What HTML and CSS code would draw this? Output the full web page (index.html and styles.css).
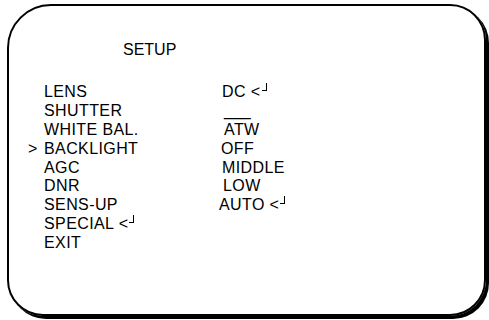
FILE: index.html
```html
<!DOCTYPE html>
<html>
<head>
<meta charset="utf-8">
<link rel="stylesheet" href="styles.css">
</head>
<body>
<div class="frame">
  <div class="title">SETUP</div>
  <div class="menu">
    <span class="mark"></span><span class="label">LENS</span><span class="value v-dc">DC &lt;<span class="enter"></span></span>
    <span class="mark"></span><span class="label">SHUTTER</span><span class="value v-bar">___</span>
    <span class="mark"></span><span class="label">WHITE BAL.</span><span class="value v-atw">ATW</span>
    <span class="mark">&gt;</span><span class="label">BACKLIGHT</span><span class="value">OFF</span>
    <span class="mark"></span><span class="label">AGC</span><span class="value v-dc">MIDDLE</span>
    <span class="mark"></span><span class="label">DNR</span><span class="value v-low">LOW</span>
    <span class="mark"></span><span class="label">SENS-UP</span><span class="value v-auto">AUTO &lt;<span class="enter"></span></span>
    <span class="mark"></span><span class="label">SPECIAL &lt;<span class="enter"></span></span><span class="value"></span>
    <span class="mark"></span><span class="label">EXIT</span><span class="value"></span>
  </div>
</div>
</body>
</html>
```
FILE: styles.css
```css
html, body {
  margin: 0;
  padding: 0;
  background: #fff;
}
body {
  width: 489px;
  height: 320px;
  overflow: hidden;
  font-family: "Liberation Sans", Arial, sans-serif;
  font-size: 16px;
  letter-spacing: 0.4px;
  color: #000;
}
.frame {
  box-sizing: border-box;
  margin: 4px 0 0 7px;
  width: 479px;
  height: 312px;
  border: 2px solid #000;
  border-radius: 44px 36px 36px 36px;
  box-shadow: 3px 3px 0 #000;
  padding: 35px 0 0 19px;
}
.title {
  line-height: 18.9px;
  padding-left: 95px;
  letter-spacing: 0;
}
.menu {
  margin-top: 23px;
  display: grid;
  grid-template-columns: 16px 177px auto;
  line-height: 18.9px;
}
.mark {
  white-space: pre;
}
.label, .value {
  white-space: nowrap;
}
.v-dc { padding-left: 1px; }
.v-bar { padding-left: 3px; letter-spacing: 0; }
.v-atw { padding-left: 3px; }
.v-low { padding-left: 2px; }
.v-auto { margin-left: -2px; }
.enter {
  display: inline-block;
  width: 4px;
  height: 7px;
  margin-left: 1px;
  border-right: 1px solid #000;
  border-bottom: 1px solid #000;
  vertical-align: 6px;
}
```
